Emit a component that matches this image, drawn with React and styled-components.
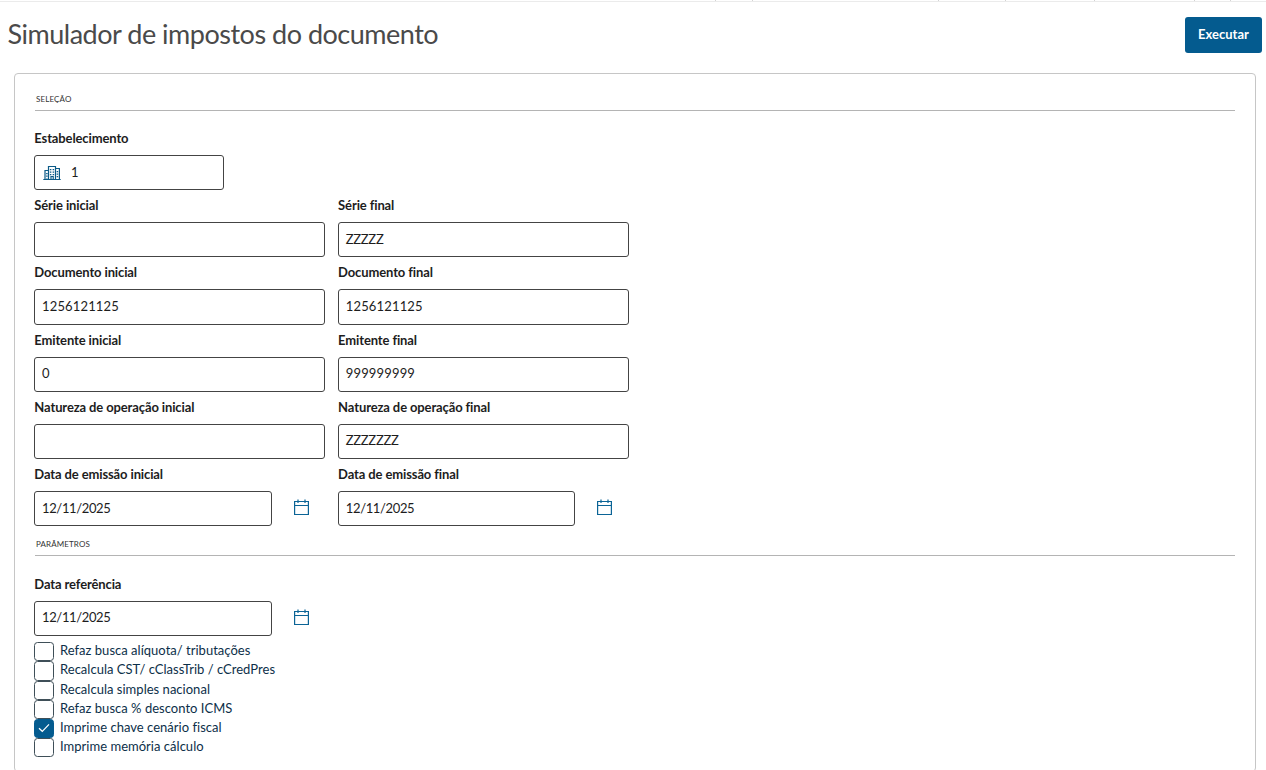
import React, { useState } from 'react'
import styled, { createGlobalStyle } from 'styled-components'

const GlobalStyle = createGlobalStyle`
    *{
        box-sizing: border-box;
    }

    body{
        margin: 0;
        background: #fff;
        overflow: hidden;
        font-family: Lato, 'Open Sans', 'Liberation Sans', sans-serif;
        font-size: 13px;
        color: #1d1d1d;
    }
`;

const rows = [
    [
        { label: 'Série inicial', value: '' },
        { label: 'Série final', value: 'ZZZZZ', spacing: -0.3 },
    ],
    [
        { label: 'Documento inicial', value: '1256121125' },
        { label: 'Documento final', value: '1256121125' },
    ],
    [
        { label: 'Emitente inicial', value: '0' },
        { label: 'Emitente final', value: '999999999' },
    ],
    [
        { label: 'Natureza de operação inicial', value: '' },
        { label: 'Natureza de operação final', value: 'ZZZZZZZ', spacing: -0.3 },
    ],
    [
        { label: 'Data de emissão inicial', value: '12/11/2025', date: true },
        { label: 'Data de emissão final', value: '12/11/2025', date: true },
    ],
]

const initialOptions = [
    { label: 'Refaz busca alíquota/ tributações', checked: false },
    { label: 'Recalcula CST/ cClassTrib / cCredPres', checked: false },
    { label: 'Recalcula simples nacional', checked: false },
    { label: 'Refaz busca % desconto ICMS', checked: false },
    { label: 'Imprime chave cenário fiscal', checked: true },
    { label: 'Imprime memória cálculo', checked: false },
]

const tabs = [716, 37, 186, 67, 89, 100, 36]

function CalendarIcon() {
    return (
        <svg width="16" height="17" viewBox="0 0 16 17" fill="none" stroke="#0b6496" strokeWidth="1.2">
            <path d="M0.6 2.5H14.4V15.5H0.6ZM0.6 6.5H14.4M4 0.5V4M11 0.5V4" />
        </svg>
    )
}

function BuildingIcon() {
    return (
        <svg width="18" height="16" viewBox="0 0 18 16" fill="none" stroke="#0b5a87" strokeWidth="1.2">
            <path d="M0.3 14.5H17.7M2 14.5V5.5H5.5M5.5 14.5V1.5H12.5V14.5M12.5 3.5H16.4V14.5M8 14.5V11.5H10.2V14.5" />
            <path d="M7.6 4V10.5M10.4 4V10.5M3.9 8V13.5M14.4 6V13.5" strokeWidth="1.5" strokeDasharray="1.2 1.3" />
        </svg>
    )
}

function Field({ label, value, date, spacing = 0.15, icon, width }) {
    return (
        <FieldStyled>
            <Label>{label}</Label>
            <Control>
                <Input $width={width || (date ? 237.6 : 291)} $spacing={date ? -0.36 : spacing}>
                    {icon}
                    <Value>{value}</Value>
                </Input>
                {date && <DateButton><CalendarIcon /></DateButton>}
            </Control>
        </FieldStyled>
    )
}

function App() {

    const [options, setOptions] = useState(initialOptions)

    const toggle = (index) => {
        setOptions(options.map((o, i) => i === index ? { ...o, checked: !o.checked } : o))
    }

    return (
        <Page>
            <GlobalStyle />
            <TabStrip>
                {tabs.map((width, i) => <TabEdge key={i} $width={width} />)}
            </TabStrip>
            <Header>
                <Title>Simulador de impostos do documento</Title>
                <Button>Executar</Button>
            </Header>
            <Card>
                <SectionTitle>SELEÇÃO</SectionTitle>
                <Field label="Estabelecimento" value="1" width={190} icon={<BuildingIcon />} />
                {rows.map((row, i) => (
                    <Row key={i}>
                        {row.map((field) => <Field key={field.label} {...field} />)}
                    </Row>
                ))}
                <SectionTitle>PARÂMETROS</SectionTitle>
                <Parameters>
                    <Field label="Data referência" value="12/11/2025" date />
                </Parameters>
                {options.map((option, i) => (
                    <Option key={option.label} onClick={() => toggle(i)}>
                        <Box $checked={option.checked}>
                            {option.checked && (
                                <svg width="12" height="10" viewBox="0 0 12 10" fill="none" stroke="#fff" strokeWidth="1.2">
                                    <path d="M1 5.2L4.3 8.3L11 1.4" />
                                </svg>
                            )}
                        </Box>
                        <OptionLabel>{option.label}</OptionLabel>
                    </Option>
                ))}
            </Card>
        </Page>
    )
}

const Page = styled.div`
    height: 770px;
    overflow: hidden;
`;

const TabStrip = styled.div`
    display: flex;
    height: 2px;
    border-bottom: 1px solid #ebebeb;
`;

const TabEdge = styled.div`
    width: ${(props) => props.$width}px;
    height: 1px;
    border-right: 1px solid #d4d4d4;
`;

const Header = styled.header`
    display: flex;
    justify-content: space-between;
    align-items: flex-start;
    height: 71px;
    padding: 15px 4px 0 7.5px;
`;

const Title = styled.h1`
    margin: 0;
    font-size: 27px;
    line-height: 34px;
    font-weight: 400;
    letter-spacing: -0.49px;
    color: #4a4a4a;
`;

const Button = styled.button`
    width: 77px;
    height: 36px;
    padding: 0 0 2px;
    border: none;
    border-radius: 3px;
    background: #045b8f;
    color: #fff;
    font-family: inherit;
    font-size: 13px;
    font-weight: 700;
`;

const Card = styled.main`
    height: 699px;
    margin: 0 10px 0 14px;
    padding: 14px 20.4px 0 19px;
    border: 1px solid #c6c6c6;
    border-radius: 4px;
`;

const SectionTitle = styled.h2`
    height: 23px;
    margin: 0 0 19px 1px;
    padding-left: 1px;
    border-bottom: 1px solid #b4b4b4;
    font-size: 8px;
    line-height: 22px;
    font-weight: 400;
    letter-spacing: 0.12px;
    color: #333;
`;

const Row = styled.div`
    display: grid;
    grid-template-columns: 290.8px 290.8px;
    column-gap: 13px;
`;

const FieldStyled = styled.div`
    height: 67.2px;
`;

const Parameters = styled.div`
    height: 67px;
    padding-top: 0.4px;
`;

const Label = styled.div`
    height: 25px;
    padding-left: 0.3px;
    line-height: 16px;
    font-size: 13px;
    font-weight: 700;
    letter-spacing: -0.12px;
    white-space: nowrap;
`;

const Control = styled.div`
    display: flex;
    align-items: center;
`;

const Input = styled.div`
    display: flex;
    align-items: center;
    gap: 10px;
    width: ${(props) => props.$width}px;
    height: 35.2px;
    padding: 0 7px 0 ${(props) => props.$width === 190 ? 8 : 7}px;
    border: 1px solid #444;
    border-radius: 3px;
    letter-spacing: ${(props) => props.$spacing}px;
`;

const Value = styled.span`
    padding-bottom: 2px;
`;

const DateButton = styled.div`
    display: flex;
    margin-left: 22px;
    padding-bottom: 2px;
`;

const Option = styled.div`
    display: flex;
    align-items: center;
    gap: 6px;
    height: 19.2px;
    color: #0c2f49;
    cursor: pointer;
`;

const OptionLabel = styled.span`
    padding-bottom: 3px;
    letter-spacing: 0.02px;
`;

const Box = styled.div`
    display: flex;
    justify-content: center;
    align-items: center;
    width: 20px;
    height: 19.2px;
    border: 1px solid ${(props) => props.$checked ? '#045b8f' : '#3f4f58'};
    border-radius: 3.5px;
    background: ${(props) => props.$checked ? '#045b8f' : '#fff'};
`;

export default App
